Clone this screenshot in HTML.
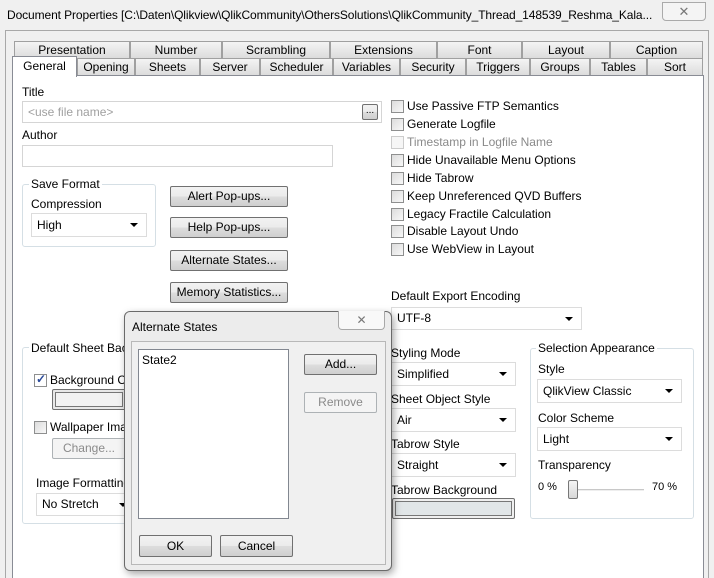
<!DOCTYPE html>
<html><head><meta charset="utf-8"><style>
*{box-sizing:border-box;margin:0;padding:0}
html,body{width:714px;height:578px;overflow:hidden}
body{background:#f0f0f0;font-family:"Liberation Sans",sans-serif;font-size:12px;color:#000;position:relative}
.a{position:absolute;white-space:nowrap}
.tab{position:absolute;height:17px;border:1px solid #a0a0a0;border-bottom:none;background:linear-gradient(#f4f4f4,#dcdcdc);text-align:center;line-height:16px;font-size:12px}
.in{position:absolute;background:#fff;border:1px solid #d5d5d5;padding-left:5px;line-height:20px}
.sel{position:absolute;background:#fff;border:1px solid #dcdcdc;padding-left:5px;line-height:20px}
.sel:after{content:"";position:absolute;right:8px;top:9px;border-left:4px solid transparent;border-right:4px solid transparent;border-top:4px solid #000}
.btn{position:absolute;border:1px solid #707070;border-radius:2px;background:linear-gradient(#f2f2f2 0,#ebebeb 50%,#dddddd 51%,#cfcfcf 100%);text-align:center;line-height:19px}
.cb{position:absolute;width:13px;height:13px;border:1px solid #8e8f8f;background:linear-gradient(135deg,#dcdcdc,#f8f8f8)}
.lbl{position:absolute;white-space:nowrap}
.grp{position:absolute;border:1px solid #d5dfe5;border-radius:3px}
.gt{position:absolute;background:#fff;padding:0 2px;white-space:nowrap}
</style></head><body>
<div class="a" style="left:7px;top:8px;font-size:12px;letter-spacing:-0.1px">Document Properties [C:\Daten\Qlikview\QlikCommunity\OthersSolutions\QlikCommunity_Thread_148539_Reshma_Kala...</div>
<div class="a" style="left:662px;top:2px;width:44px;height:19px;border:1px solid #aaa;border-radius:0 0 4px 4px;background:#f4f4f4;text-align:center;color:#777;font-size:13px;line-height:17px">✕</div>
<div class="a" style="left:5px;top:30px;width:704px;height:560px;border:1px solid #a8a8a8;background:#f0f0f0"></div>
<div class="a" style="left:12px;top:75px;width:692px;height:510px;border:1px solid #898c95;background:#fff"></div>
<div class="tab" style="left:14px;top:41px;width:116px">Presentation</div>
<div class="tab" style="left:130px;top:41px;width:92px">Number</div>
<div class="tab" style="left:222px;top:41px;width:108px">Scrambling</div>
<div class="tab" style="left:330px;top:41px;width:107px">Extensions</div>
<div class="tab" style="left:437px;top:41px;width:85px">Font</div>
<div class="tab" style="left:522px;top:41px;width:88px">Layout</div>
<div class="tab" style="left:610px;top:41px;width:93px">Caption</div>
<div class="tab" style="left:77px;top:58px;width:58px">Opening</div>
<div class="tab" style="left:135px;top:58px;width:65px">Sheets</div>
<div class="tab" style="left:200px;top:58px;width:60px">Server</div>
<div class="tab" style="left:260px;top:58px;width:73px">Scheduler</div>
<div class="tab" style="left:333px;top:58px;width:67px">Variables</div>
<div class="tab" style="left:400px;top:58px;width:66px">Security</div>
<div class="tab" style="left:466px;top:58px;width:64px">Triggers</div>
<div class="tab" style="left:530px;top:58px;width:60px">Groups</div>
<div class="tab" style="left:590px;top:58px;width:57px">Tables</div>
<div class="tab" style="left:647px;top:58px;width:56px">Sort</div>
<div class="tab" style="left:12px;top:56px;width:65px;height:21px;background:#fff;border-color:#898c95;line-height:18px;z-index:2">General</div>

<div class="lbl" style="left:22px;top:85px">Title</div>
<div class="in" style="left:22px;top:101px;width:360px;height:22px;color:#a0a0a0;background:#fff">&lt;use file name&gt;</div>
<div class="btn" style="left:362px;top:104px;width:16px;height:16px;line-height:12px;font-size:10px">...</div>
<div class="lbl" style="left:22px;top:128px">Author</div>
<div class="in" style="left:22px;top:145px;width:311px;height:22px"></div>

<div class="grp" style="left:22px;top:184px;width:134px;height:63px"></div>
<div class="gt" style="left:29px;top:177px">Save Format</div>
<div class="lbl" style="left:31px;top:197px">Compression</div>
<div class="sel" style="left:31px;top:213px;width:116px;height:24px;line-height:22px">High</div>

<div class="btn" style="left:170px;top:186px;width:118px;height:21px">Alert Pop-ups...</div>
<div class="btn" style="left:170px;top:217px;width:118px;height:21px">Help Pop-ups...</div>
<div class="btn" style="left:170px;top:250px;width:118px;height:21px">Alternate States...</div>
<div class="btn" style="left:170px;top:282px;width:118px;height:21px">Memory Statistics...</div>

<div class="cb" style="left:391px;top:100px"></div><div class="lbl" style="left:407px;top:99px">Use Passive FTP Semantics</div>
<div class="cb" style="left:391px;top:118px"></div><div class="lbl" style="left:407px;top:117px">Generate Logfile</div>
<div class="cb" style="left:391px;top:136px;border-color:#ccc;background:#f6f6f6"></div><div class="lbl" style="left:407px;top:135px;color:#8a8a8a">Timestamp in Logfile Name</div>
<div class="cb" style="left:391px;top:154px"></div><div class="lbl" style="left:407px;top:153px">Hide Unavailable Menu Options</div>
<div class="cb" style="left:391px;top:172px"></div><div class="lbl" style="left:407px;top:171px">Hide Tabrow</div>
<div class="cb" style="left:391px;top:190px"></div><div class="lbl" style="left:407px;top:189px">Keep Unreferenced QVD Buffers</div>
<div class="cb" style="left:391px;top:208px"></div><div class="lbl" style="left:407px;top:207px">Legacy Fractile Calculation</div>
<div class="cb" style="left:391px;top:225px"></div><div class="lbl" style="left:407px;top:224px">Disable Layout Undo</div>
<div class="cb" style="left:391px;top:243px"></div><div class="lbl" style="left:407px;top:242px">Use WebView in Layout</div>

<div class="lbl" style="left:391px;top:289px">Default Export Encoding</div>
<div class="sel" style="left:391px;top:307px;width:191px;height:23px">UTF-8</div>

<div class="lbl" style="left:391px;top:346px">Styling Mode</div>
<div class="sel" style="left:391px;top:362px;width:125px;height:24px;line-height:22px">Simplified</div>
<div class="lbl" style="left:391px;top:392px">Sheet Object Style</div>
<div class="sel" style="left:391px;top:408px;width:125px;height:24px;line-height:22px">Air</div>
<div class="lbl" style="left:391px;top:437px">Tabrow Style</div>
<div class="sel" style="left:391px;top:453px;width:125px;height:24px;line-height:22px">Straight</div>
<div class="lbl" style="left:391px;top:483px">Tabrow Background</div>
<div class="a" style="left:392px;top:498px;width:123px;height:21px;border:1px solid #707070;border-radius:2px;padding:2px;background:#f0f0f0"><div style="width:100%;height:100%;border:1px solid #777;background:#e1e6e8"></div></div>

<div class="grp" style="left:530px;top:348px;width:164px;height:171px"></div>
<div class="gt" style="left:536px;top:341px">Selection Appearance</div>
<div class="lbl" style="left:538px;top:362px">Style</div>
<div class="sel" style="left:537px;top:379px;width:145px;height:24px;line-height:22px">QlikView Classic</div>
<div class="lbl" style="left:538px;top:411px">Color Scheme</div>
<div class="sel" style="left:537px;top:427px;width:145px;height:24px;line-height:22px">Light</div>
<div class="lbl" style="left:538px;top:458px">Transparency</div>
<div class="lbl" style="left:538px;top:481px;font-size:11px">0 %</div>
<div class="a" style="left:572px;top:489px;width:72px;height:2px;background:#c8c8c8;border-bottom:1px solid #eee"></div>
<div class="a" style="left:568px;top:480px;width:10px;height:19px;border:1px solid #777;border-radius:2px;background:linear-gradient(#f4f4f4,#d8d8d8)"></div>
<div class="lbl" style="left:652px;top:481px;font-size:11px">70 %</div>

<div class="grp" style="left:22px;top:347px;width:120px;height:177px"></div>
<div class="gt" style="left:29px;top:341px">Default Sheet Back</div>
<div class="cb" style="left:34px;top:374px;background:#fff"><span style="position:absolute;left:1px;top:-3px;font-size:12px;color:#2a4a9a;font-weight:bold">✓</span></div>
<div class="lbl" style="left:50px;top:373px">Background Col</div>
<div class="a" style="left:52px;top:389px;width:74px;height:21px;border:1px solid #707070;border-radius:2px;padding:2px;background:#e8e8e8"><div style="width:100%;height:100%;border:1px solid #777;background:#f2f2f2"></div></div>
<div class="cb" style="left:34px;top:421px"></div>
<div class="lbl" style="left:50px;top:420px">Wallpaper Image</div>
<div class="btn" style="left:52px;top:438px;width:74px;height:21px;color:#8a8a8a;border-color:#adb2b5;background:#f4f4f4">Change...</div>
<div class="lbl" style="left:36px;top:476px">Image Formatting</div>
<div class="sel" style="left:36px;top:493px;width:100px;height:23px">No Stretch</div>

<div class="a" style="left:124px;top:311px;width:268px;height:260px;border:1px solid #6a6a6a;border-radius:6px;background:#ececec;box-shadow:2px 3px 8px rgba(0,0,0,.35)"></div>
<div class="lbl" style="left:132px;top:320px">Alternate States</div>
<div class="a" style="left:338px;top:311px;width:47px;height:19px;border:1px solid #a8a8a8;border-top:none;border-radius:0 0 4px 4px;background:#f8f8f8;text-align:center;color:#777;font-size:12px;line-height:18px">✕</div>
<div class="a" style="left:131px;top:341px;width:255px;height:224px;border:1px solid #b8b8b8;background:#f0f0f0"></div>
<div class="a" style="left:138px;top:349px;width:151px;height:170px;border:1px solid #828790;background:#fff;padding:3px 3px">State2</div>
<div class="btn" style="left:304px;top:354px;width:73px;height:21px">Add...</div>
<div class="btn" style="left:304px;top:392px;width:73px;height:21px;color:#8a8a8a;border-color:#adb2b5;background:#f4f4f4">Remove</div>
<div class="btn" style="left:139px;top:535px;width:73px;height:22px;line-height:20px">OK</div>
<div class="btn" style="left:220px;top:535px;width:73px;height:22px;line-height:20px">Cancel</div>
</body></html>
